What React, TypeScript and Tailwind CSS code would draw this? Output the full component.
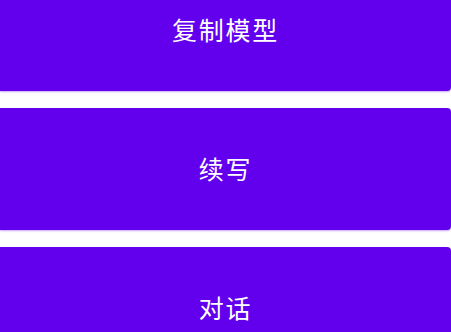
const actions = ["复制模型", "续写", "对话"]

export default function App() {
  return (
    <div className="h-[332px] w-[451px] overflow-hidden bg-white">
      <div className="mt-[-31px] flex flex-col gap-[17px]">
        {actions.map((label) => (
          <button
            key={label}
            className="flex h-[122px] w-full items-center justify-center rounded-r-[4px] bg-[#6200ee] pb-[1px] text-[25px] tracking-[0.07em] text-white shadow-[0_1px_2px_rgba(98,0,238,0.35)]"
            style={{ fontFamily: '"Noto Sans CJK SC", "Noto Sans", sans-serif' }}
          >
            {label}
          </button>
        ))}
      </div>
    </div>
  )
}
